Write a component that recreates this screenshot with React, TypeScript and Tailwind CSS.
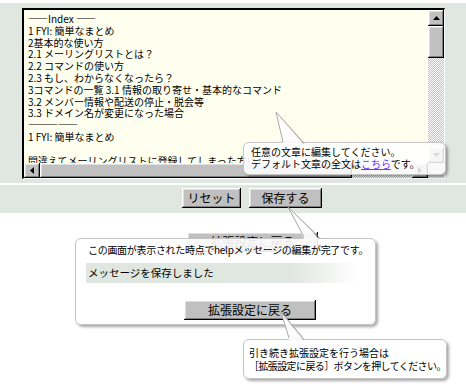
import React from "react";

const raised =
  "bg-[#c0c0c0] shadow-[inset_-1px_-1px_0_#000,inset_1px_1px_0_#fff,inset_-2px_-2px_0_#808080,inset_2px_2px_0_#dfdfdf]";
const checker =
  "bg-[repeating-conic-gradient(#c0c0c0_0%_25%,#ffffff_0%_50%)] bg-[length:2px_2px]";

const lines = [
  "――Index ――",
  "1 FYI: 簡単なまとめ",
  "2基本的な使い方",
  "2.1 メーリングリストとは？",
  "2.2 コマンドの使い方",
  "2.3 もし、わからなくなったら？",
  "3コマンドの一覧 3.1 情報の取り寄せ・基本的なコマンド",
  "3.2 メンバー情報や配送の停止・脱会等",
  "3.3 ドメイン名が変更になった場合",
  "―――――",
  "1 FYI: 簡単なまとめ",
  "",
  "間違えてメーリングリストに登録してしまった方は",
];

function Arrow({ dir }: { dir: "up" | "down" | "left" | "right" }) {
  const pts = {
    up: "0,4 3.5,0 7,4",
    down: "0,0 3.5,4 7,0",
    left: "4,0 0,3.5 4,7",
    right: "0,0 4,3.5 0,7",
  }[dir];
  const vertical = dir === "up" || dir === "down";
  return (
    <svg width={vertical ? 7 : 4} height={vertical ? 4 : 7} viewBox={vertical ? "0 0 7 4" : "0 0 4 7"}>
      <polygon points={pts} fill="#000" />
    </svg>
  );
}

function Pointer({
  left,
  top,
  w,
  h,
  tip,
  a,
  b,
}: {
  left: number;
  top: number;
  w: number;
  h: number;
  tip: [number, number];
  a: [number, number];
  b: [number, number];
}) {
  return (
    <svg
      className="absolute"
      style={{ left, top }}
      width={w}
      height={h}
      viewBox={`0 0 ${w} ${h}`}
    >
      <polygon
        points={`${tip[0] + 1.5},${tip[1] + 1.5} ${a[0] + 2},${a[1]} ${b[0] + 2},${b[1]}`}
        fill="rgba(0,0,0,0.18)"
      />
      <polygon points={`${tip.join(",")} ${a.join(",")} ${b.join(",")}`} fill="rgba(255,255,255,0.92)" />
      <polyline points={`${a[0]},${a[1] - 2} ${tip.join(",")} ${b[0]},${b[1] - 2}`} fill="none" stroke="#a8a8a8" strokeWidth="1" />
    </svg>
  );
}

export default function App() {
  return (
    <div className="relative w-[466px] h-[387px] overflow-hidden bg-white pt-[3px] text-black font-['Noto_Sans_CJK_JP','Noto_Sans',sans-serif]">
      {/* Editor panel */}
      <div className="h-[180px] bg-[#e0e6e0] pl-[22px] pt-[5px]">
        <div className="flex h-[171px] w-[423px] flex-col border-t-2 border-l-2 border-r border-b border-t-black border-l-black border-r-white border-b-white bg-[#fffff0]">
          <div className="flex h-[153px]">
            <div className="flex-1 overflow-hidden whitespace-nowrap pl-[4px] pt-[3px] text-[10px] leading-[11.8px]">
              {lines.map((l, i) => (
                <div key={i} className="h-[11.8px]">
                  {l}
                </div>
              ))}
            </div>
            <div className="flex w-[16px] flex-col">
              <div className={`${raised} flex h-[16px] items-center justify-center`}>
                <Arrow dir="up" />
              </div>
              <div className={`${raised} h-[32px]`} />
              <div className={`${checker} flex-1`} />
              <div className={`${raised} flex h-[16px] items-center justify-center`}>
                <Arrow dir="down" />
              </div>
            </div>
          </div>
          <div className="flex h-[15px]">
            <div className="flex flex-1">
              <div className={`${raised} flex w-[16px] items-center justify-center`}>
                <Arrow dir="left" />
              </div>
              <div className={`${raised} w-[312px]`} />
              <div className={`${checker} flex-1`} />
              <div className={`${raised} flex w-[16px] items-center justify-center`}>
                <Arrow dir="right" />
              </div>
            </div>
            <div className="w-[16px] bg-[#d4d4d4]" />
          </div>
        </div>
      </div>

      {/* Button row */}
      <div className="mt-[2px] flex h-[28px] gap-[8px] bg-[#e0e6e0] pl-[182px] pt-[3px]">
        <button className={`${raised} h-[20px] w-[59px] text-[12px] leading-[20px]`}>リセット</button>
        <button className={`${raised} h-[20px] w-[73px] text-[12px] leading-[20px]`}>保存する</button>
      </div>

      <div className="pl-[187px] pt-[15px]">
        <button className={`${raised} h-[20px] w-[131px] text-[12px] leading-[20px]`}>拡張設定に戻る</button>
      </div>

      {/* Callout 1 */}
      <div className="absolute left-[243px] top-[142px] h-[33px] w-[203px] whitespace-nowrap rounded-[6px] border border-[#c4c4c4] bg-white/85 pl-[7px] pt-[3px] text-[10px] leading-[12px] shadow-[2px_2px_3px_rgba(0,0,0,0.35)]">
        <div>任意の文章に編集してください。</div>
        <div>
          デフォルト文章の全文は<span className="text-[#6633ff] underline">こちら</span>です。
        </div>
      </div>
      <Pointer left={270} top={108} w={40} h={37} tip={[6, 4]} a={[13, 36]} b={[33, 36]} />

      {/* Callout 2 */}
      <div className="absolute left-[75px] top-[238px] h-[87px] w-[301px] whitespace-nowrap rounded-[6px] border border-[#c4c4c4] bg-white/90 pl-[10px] pt-[5px] shadow-[2px_2px_3px_rgba(0,0,0,0.35)]">
        <div className="pl-[2px] text-[10px] leading-[12px] tracking-[-0.3px]">
          この画面が表示された時点でhelpメッセージの編集が完了です。
        </div>
        <div className="mt-[7px] h-[20px] w-[272px] bg-gradient-to-r from-[#e0e6e0] from-75% to-transparent pl-[2px] text-[10.5px] leading-[20px]">
          メッセージを保存しました
        </div>
        <div className="pl-[98px] pt-[13px]">
          <button className={`${raised} h-[20px] w-[132px] text-[12px] leading-[20px]`}>拡張設定に戻る</button>
        </div>
      </div>
      <Pointer left={282} top={203} w={42} h={37} tip={[6, 4]} a={[22, 36]} b={[37, 36]} />

      {/* Callout 3 */}
      <div className="absolute left-[243px] top-[339px] h-[40px] w-[204px] whitespace-nowrap rounded-[6px] border border-[#c4c4c4] bg-white/90 pl-[5px] pt-[6px] text-[10px] leading-[13px] shadow-[2px_2px_3px_rgba(0,0,0,0.35)]">
        <div>引き続き拡張設定を行う場合は</div>
        <div className="tracking-[-0.6px]">［拡張設定に戻る］ボタンを押してください。</div>
      </div>
      <Pointer left={276} top={308} w={32} h={33} tip={[5, 4]} a={[13, 32]} b={[27, 32]} />
    </div>
  );
}
